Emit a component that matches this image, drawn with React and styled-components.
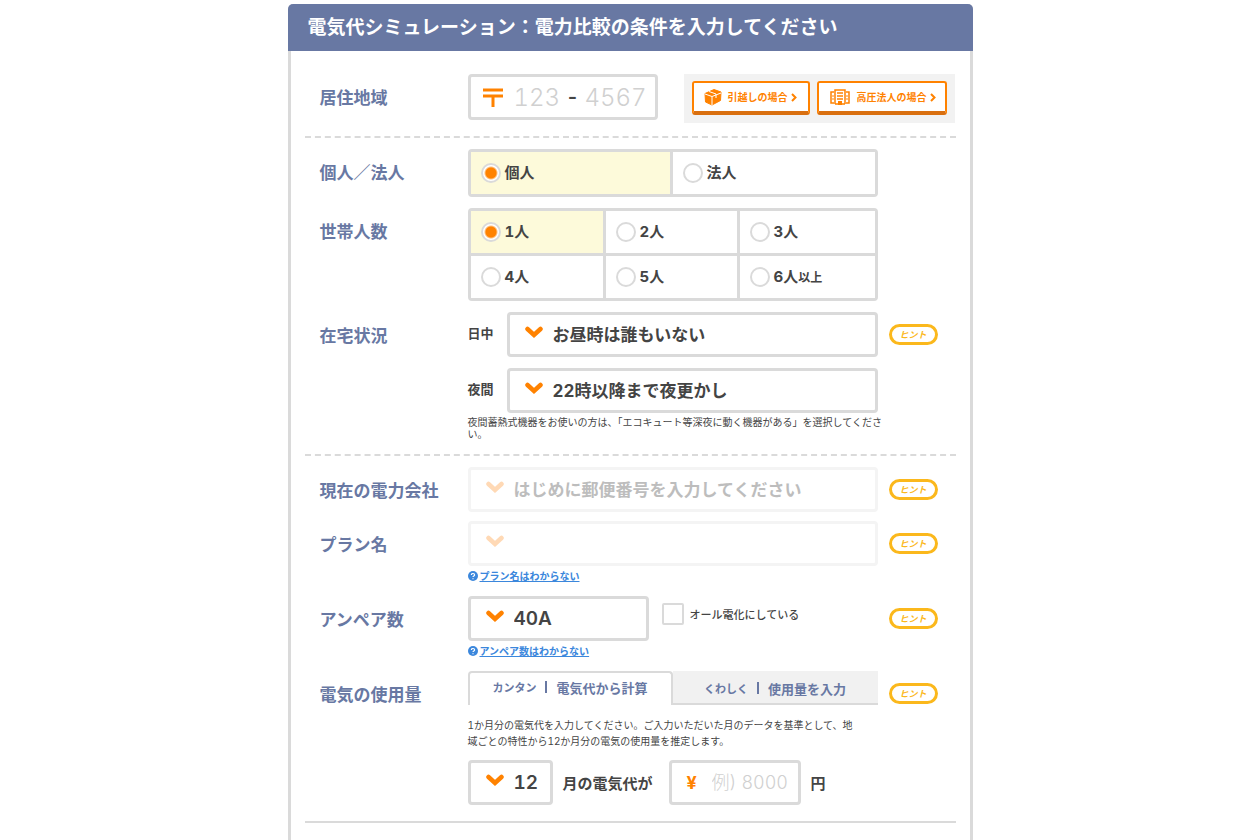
import React, { useId, useState } from "react";
import styled, { createGlobalStyle, css } from "styled-components";

const c = {
  navy: "#6878a3",
  line: "#dadada",
  faint: "#f4f4f4",
  text: "#444",
  orange: "#ff8200",
  deepOrange: "#d96f10",
  hint: "#fbb81c",
  link: "#3b87dc",
  selected: "#fdfada",
};

const GlobalStyle = createGlobalStyle`
  *, *::before, *::after { box-sizing: border-box; }
  body {
    margin: 0;
    background: #fff;
    color: ${c.text};
    font-family: "Inter", "Noto Sans CJK JP", sans-serif;
    font-size: 15px;
    font-variant-numeric: tabular-nums;
  }
  input, select, button { font: inherit; font-variant-numeric: inherit; color: inherit; margin: 0; }
`;

const Page = styled.main`
  padding: 4px 16px 0;
`;

const Panel = styled.form`
  max-width: 685px;
  min-height: 100vh;
  margin: 0 auto;
  border: 3px solid ${c.line};
  border-top: 0;
  border-radius: 5px;
`;

const PanelHeader = styled.h1`
  margin: 0 -3px;
  padding: 0 20px;
  background: ${c.navy};
  color: #fff;
  border-radius: 5px 5px 0 0;
  font-size: 19px;
  font-weight: 700;
  line-height: 47px;
`;

const PanelBody = styled.div`
  padding: 23px 14px 32px;
`;

const Section = styled.section`
  display: flex;
  flex-direction: column;
  gap: ${(p) => p.$gap}px;
  padding-bottom: ${(p) => p.$bottom}px;
  margin-bottom: 11px;
  border-bottom: 2px ${(p) => (p.$solid ? "solid" : "dashed")} ${c.line};
`;

const Row = styled.div`
  display: grid;
  grid-template-columns: 148px minmax(0, 410px) auto;
  align-items: start;
  padding-left: 15px;
`;

const RegionRow = styled.div`
  display: grid;
  grid-template-columns: 148px 190px auto;
  align-items: start;
  padding: 0 1px 0 15px;
`;

const RowLabel = styled.h2`
  margin: 0;
  padding-top: 12px;
  color: ${c.navy};
  font-size: 17px;
  font-weight: 700;
  line-height: 24px;
`;

const Hint = styled.button`
  width: 49px;
  height: 21px;
  margin: 12px 0 0 11px;
  padding: 0;
  border: 3px solid ${c.hint};
  border-radius: 11px;
  background: #fff;
  color: ${c.hint};
  font-size: 9px;
  font-style: italic;
  font-weight: 700;
  line-height: 13px;
`;

const PostalBox = styled.div`
  display: flex;
  align-items: center;
  height: 46px;
  padding-left: 12px;
  border: 3px solid ${c.line};
  border-radius: 4px;
`;

const PostalInput = styled.input`
  width: ${(p) => p.$width}px;
  padding: 0;
  border: 0;
  outline: 0;
  background: none;
  font-size: 24px;
  font-weight: 300;
  &::placeholder { color: #d0d0d0; opacity: 1; }
`;

const PostalMark = styled.svg`
  width: 20px;
  height: 20px;
  margin-right: 11px;
`;

const Hyphen = styled.span`
  width: 24px;
  text-align: center;
  font-size: 20px;
  font-weight: 600;
`;

const CaseBox = styled.div`
  display: flex;
  gap: 7px;
  justify-self: end;
  padding: 7px 8px 8px;
  background: #f2f2f2;
`;

const CaseButton = styled.button`
  display: flex;
  align-items: center;
  width: ${(p) => p.$width}px;
  height: 34px;
  padding: 0 10px;
  border: 2px solid ${c.orange};
  border-bottom: 4px solid ${c.deepOrange};
  border-radius: 3px;
  background: #fff;
  color: ${c.orange};
  font-size: 10px;
  font-weight: 700;
  line-height: 16px;
  white-space: nowrap;
`;

const CaseIcon = styled.svg`
  flex: none;
  width: ${(p) => p.$width}px;
  height: 18px;
  margin-right: 6px;
`;

const CaseArrow = styled.svg`
  flex: none;
  width: 6px;
  height: 9px;
  margin-left: 3px;
`;

const RadioGrid = styled.div`
  display: grid;
  grid-template-columns: ${(p) => p.$columns};
  gap: 3px;
  border: 3px solid ${c.line};
  border-radius: 4px;
  background: ${c.line};
`;

const RadioCell = styled.label`
  display: flex;
  align-items: center;
  gap: 4px;
  height: 42px;
  padding-left: 10px;
  background: ${(p) => (p.$on ? c.selected : "#fff")};
  font-size: 15px;
  font-weight: 700;
`;

const RadioInput = styled.input`
  appearance: none;
  flex: none;
  width: 20px;
  height: 20px;
  border: 2px solid ${c.line};
  border-radius: 50%;
  background: #fff;
  &:checked { background: radial-gradient(circle, ${c.orange} 5px, #fff 7px); }
`;

const RadioText = styled.span`
  padding-bottom: 4px;
`;

const Small = styled.small`
  font-size: 12px;
`;

const Stack = styled.div`
  display: flex;
  flex-direction: column;
  gap: 11px;
`;

const TimeRow = styled.div`
  display: grid;
  grid-template-columns: 39px 1fr;
  align-items: center;
`;

const TimeLabel = styled.label`
  padding-bottom: 4px;
  font-size: 13px;
  font-weight: 700;
`;

const SelectWrap = styled.div`
  position: relative;
  width: ${(p) => (p.$width ? `${p.$width}px` : "100%")};
`;

const SelectInput = styled.select`
  appearance: none;
  display: block;
  width: 100%;
  height: 45px;
  padding: 0 0 0 43px;
  border: 3px solid ${c.line};
  border-radius: 4px;
  background: #fff;
  color: ${c.text};
  font-size: ${(p) => (p.$large ? 19 : 17)}px;
  font-weight: 700;
  ${(p) => p.$large && css`font-weight: 600;`}
  &:disabled { border-color: ${c.faint}; color: #bdbdbd; opacity: 1; }
`;

const Chevron = styled.svg`
  position: absolute;
  top: 14px;
  left: 18px;
  width: 18px;
  height: 13px;
  pointer-events: none;
`;

const Note = styled.p`
  margin: 3px -10px 0 0;
  font-size: 10px;
  line-height: 12px;
`;

const Help = styled.p`
  display: flex;
  align-items: center;
  gap: 2px;
  margin: 4px 0 5px;
  font-size: 10px;
  font-weight: 700;
  line-height: 12px;
`;

const HelpLink = styled.a`
  color: ${c.link};
  text-decoration: underline;
`;

const HelpIcon = styled.svg`
  width: 10px;
  height: 10px;
`;

const AmpereRow = styled.div`
  display: flex;
  align-items: flex-start;
`;

const CheckLabel = styled.label`
  display: flex;
  align-items: center;
  gap: 6px;
  margin: 7px 0 0 13px;
  font-size: 11px;
  font-weight: 500;
`;

const CheckInput = styled.input`
  appearance: none;
  width: 22px;
  height: 22px;
  border: 2px solid ${c.line};
  border-radius: 2px;
  background: #fff;
  &:checked { background: ${c.orange}; }
`;

const Tabs = styled.div`
  display: grid;
  grid-template-columns: 1fr 1fr;
`;

const Tab = styled.button`
  display: flex;
  align-items: center;
  justify-content: center;
  gap: 9px;
  height: 34px;
  padding: 0;
  color: ${c.navy};
  font-size: 13px;
  font-weight: 700;
  border: 2px solid transparent;
  ${(p) =>
    p.$on
      ? css`
          border-color: ${c.line};
          border-bottom: 0;
          border-radius: 4px 4px 0 0;
          padding-bottom: 4px;
          background: #fff;
        `
      : css`
          border: 0;
          border-bottom: 2px solid ${c.line};
          padding-top: 2px;
          background: #f1f1f1;
        `}
`;

const TabKind = styled.span`
  font-size: 11px;
`;

const TabBar = styled.span`
  width: 2px;
  height: 12px;
  background: ${c.navy};
`;

const Guide = styled.p`
  margin: 12px 0 11px;
  font-size: 10px;
  line-height: 16px;
`;

const BillRow = styled.div`
  display: flex;
  align-items: center;
  gap: 10px;
  font-weight: 700;
`;

const Amount = styled.label`
  display: flex;
  align-items: center;
  width: 132px;
  height: 45px;
  margin-left: 6px;
  padding-left: 15px;
  border: 3px solid ${c.line};
  border-radius: 4px;
`;

const Yen = styled.span`
  width: 25px;
  color: ${c.orange};
  font-size: 18px;
`;

const AmountInput = styled.input`
  flex: 1;
  min-width: 0;
  padding: 0;
  border: 0;
  outline: 0;
  background: none;
  font-size: 18px;
  font-weight: 300;
  &::placeholder { color: #d0d0d0; opacity: 1; }
`;

function Dropdown({ value, width, large, disabled, id, label }) {
  return (
    <SelectWrap $width={width}>
      <SelectInput id={id} aria-label={id ? undefined : label} $large={large} disabled={disabled}>
        <option>{value}</option>
      </SelectInput>
      <Chevron viewBox="0 0 18 13" aria-hidden="true">
        <path
          d="M2.5 3L9 9l6.500-6"
          fill="none"
          stroke={disabled ? "#ffd9b5" : c.orange}
          strokeWidth="4.500"
          strokeLinecap="round"
        />
      </Chevron>
    </SelectWrap>
  );
}

function RadioGroup({ label, columns, options }) {
  const name = useId();
  const [selected, setSelected] = useState(0);
  return (
    <RadioGrid $columns={columns} role="radiogroup" aria-label={label}>
      {options.map((option, i) => (
        <RadioCell key={i} $on={selected === i}>
          <RadioInput type="radio" name={name} checked={selected === i} onChange={() => setSelected(i)} />
          <RadioText>{option}</RadioText>
        </RadioCell>
      ))}
    </RadioGrid>
  );
}

function HelpLine({ children }) {
  return (
    <Help>
      <HelpIcon viewBox="0 0 10 10" aria-hidden="true">
        <circle cx="5" cy="5" r="5" fill={c.link} />
        <path
          d="M3.4 3.9C3.4 2 6.6 2 6.6 3.9C6.6 4.9 5 4.9 5 6M5 7.2v1"
          fill="none"
          stroke="#fff"
          strokeWidth="1.2"
        />
      </HelpIcon>
      <HelpLink href="#help">{children}</HelpLink>
    </Help>
  );
}

function Arrow() {
  return (
    <CaseArrow viewBox="0 0 6 9" aria-hidden="true">
      <path d="M1 1l3.5 3.5L1 8" fill="none" stroke={c.orange} strokeWidth="2" />
    </CaseArrow>
  );
}

export default function App() {
  return (
    <Page>
      <GlobalStyle />
      <Panel onSubmit={(e) => e.preventDefault()}>
        <PanelHeader>電気代シミュレーション：電力比較の条件を入力してください</PanelHeader>
        <PanelBody>
          <Section $gap={0} $bottom={13}>
            <RegionRow>
              <RowLabel>居住地域</RowLabel>
              <PostalBox>
                <PostalMark viewBox="0 0 20 20" aria-hidden="true">
                  <path d="M0 3h20M0 9h20M10 9v11" fill="none" stroke={c.orange} strokeWidth="3" />
                </PostalMark>
                <PostalInput $width={47} placeholder="123" aria-label="郵便番号 上3桁" />
                <Hyphen>-</Hyphen>
                <PostalInput $width={66} placeholder="4567" aria-label="郵便番号 下4桁" />
              </PostalBox>
              <CaseBox>
                <CaseButton type="button" $width={118}>
                  <CaseIcon $width={18} viewBox="0 0 18 18" aria-hidden="true">
                    <path d="M10 1.500l7 2.500-.5 8.500L8 17l-6.500-3L1 5.500z" fill={c.orange} stroke={c.orange} strokeLinejoin="round" />
                    <path d="M1 6l7 2.500L17 5M8 8.500V17M5 3.500l7 2.500v4" fill="none" stroke="#fff" strokeWidth="1" />
                  </CaseIcon>
                  引越しの場合
                  <Arrow />
                </CaseButton>
                <CaseButton type="button" $width={130}>
                  <CaseIcon $width={22} viewBox="0 0 22 18" aria-hidden="true">
                    <path d="M6 16V2h10v14M5 4H2v11h3M17 4h3v11h-3M6 16h3M13 16h3" fill="none" stroke={c.orange} strokeWidth="1.500" />
                    <path d="M8 5h6M8 8h6M8 11h6" stroke={c.orange} strokeWidth="1.500" />
                    <path d="M9 13h4v4H9z" fill={c.orange} />
                    <path d="M3 8h2M3 11h2M17 8h2M17 11h2" stroke={c.orange} strokeWidth="1" />
                  </CaseIcon>
                  高圧法人の場合
                  <Arrow />
                </CaseButton>
              </CaseBox>
            </RegionRow>
          </Section>

          <Section $gap={11} $bottom={14}>
            <Row>
              <RowLabel>個人／法人</RowLabel>
              <RadioGroup label="個人／法人" columns="199px 1fr" options={["個人", "法人"]} />
            </Row>
            <Row>
              <RowLabel>世帯人数</RowLabel>
              <RadioGroup
                label="世帯人数"
                columns="132px 131px 1fr"
                options={["1人", "2人", "3人", "4人", "5人", <>6人<Small>以上</Small></>]}
              />
            </Row>
            <Row>
              <RowLabel>在宅状況</RowLabel>
              <div>
                <Stack>
                  <TimeRow>
                    <TimeLabel htmlFor="daytime">日中</TimeLabel>
                    <Dropdown id="daytime" value="お昼時は誰もいない" />
                  </TimeRow>
                  <TimeRow>
                    <TimeLabel htmlFor="night">夜間</TimeLabel>
                    <Dropdown id="night" value="22時以降まで夜更かし" />
                  </TimeRow>
                </Stack>
                <Note>
                  夜間蓄熱式機器をお使いの方は、「エコキュート等深夜に動く機器がある」を選択してくださ
                  <br />
                  い。
                </Note>
              </div>
              <Hint type="button">ヒント</Hint>
            </Row>
          </Section>

          <Section $gap={9} $bottom={16} $solid>
            <Row>
              <RowLabel>現在の電力会社</RowLabel>
              <Dropdown label="現在の電力会社" value="はじめに郵便番号を入力してください" disabled />
              <Hint type="button">ヒント</Hint>
            </Row>
            <Row>
              <RowLabel>プラン名</RowLabel>
              <div>
                <Dropdown label="プラン名" value="" disabled />
                <HelpLine>プラン名はわからない</HelpLine>
              </div>
              <Hint type="button">ヒント</Hint>
            </Row>
            <Row>
              <RowLabel>アンペア数</RowLabel>
              <div>
                <AmpereRow>
                  <Dropdown label="アンペア数" value="40A" width={181} large />
                  <CheckLabel>
                    <CheckInput type="checkbox" />
                    オール電化にしている
                  </CheckLabel>
                </AmpereRow>
                <HelpLine>アンペア数はわからない</HelpLine>
              </div>
              <Hint type="button">ヒント</Hint>
            </Row>
            <Row>
              <RowLabel>電気の使用量</RowLabel>
              <div>
                <Tabs role="tablist">
                  <Tab type="button" role="tab" aria-selected="true" $on>
                    <TabKind>カンタン</TabKind>
                    <TabBar />
                    電気代から計算
                  </Tab>
                  <Tab type="button" role="tab" aria-selected="false">
                    <TabKind>くわしく</TabKind>
                    <TabBar />
                    使用量を入力
                  </Tab>
                </Tabs>
                <Guide>
                  1か月分の電気代を入力してください。ご入力いただいた月のデータを基準として、地
                  <br />
                  域ごとの特性から12か月分の電気の使用量を推定します。
                </Guide>
                <BillRow>
                  <Dropdown label="月" value="12" width={85} large />
                  <span>月の電気代が</span>
                  <Amount>
                    <Yen>¥</Yen>
                    <AmountInput placeholder="例) 8000" aria-label="電気代" />
                  </Amount>
                  <span>円</span>
                </BillRow>
              </div>
              <Hint type="button">ヒント</Hint>
            </Row>
          </Section>
        </PanelBody>
      </Panel>
    </Page>
  );
}
